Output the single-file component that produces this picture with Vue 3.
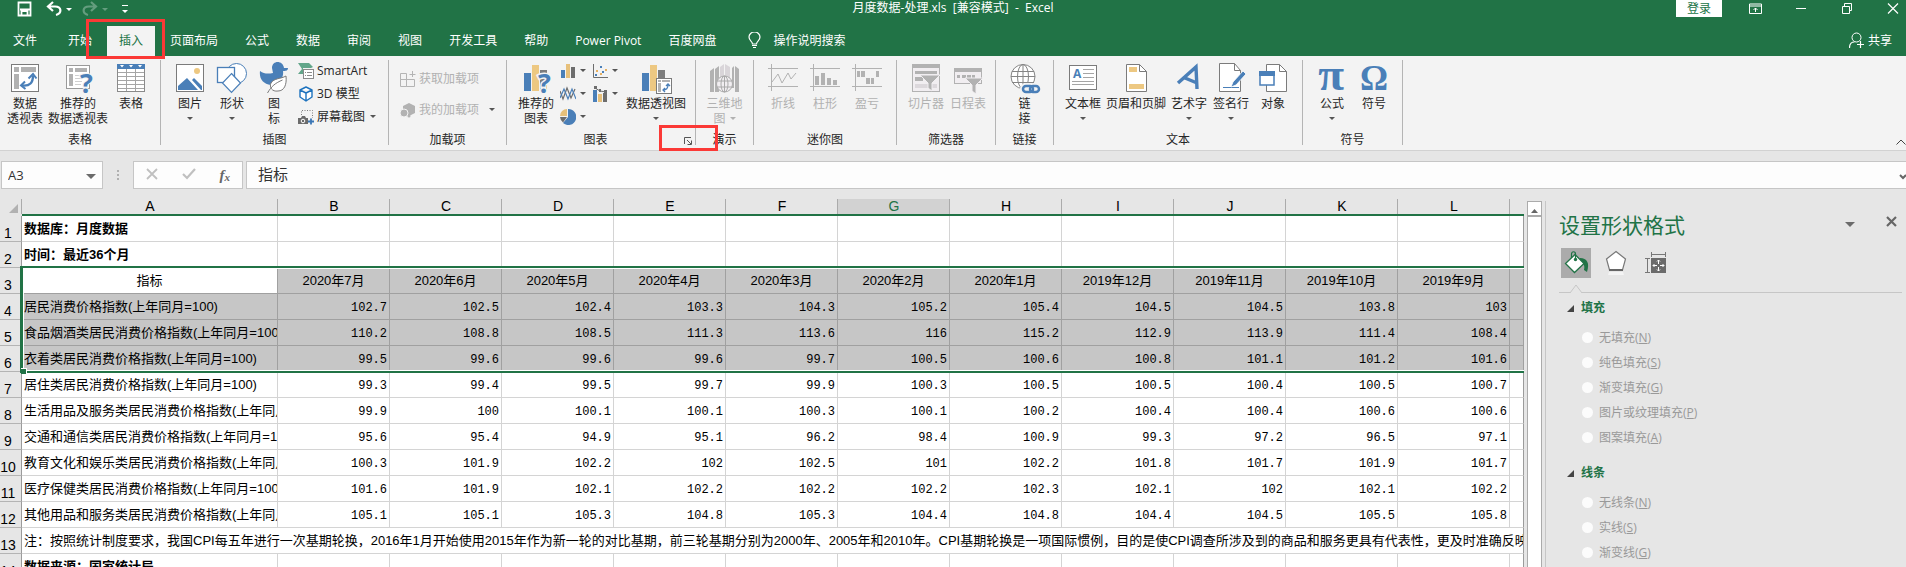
<script setup>
import { ref } from 'vue'

const tabs = ['文件', '开始', '插入', '页面布局', '公式', '数据', '审阅', '视图', '开发工具', '帮助', 'Power Pivot', '百度网盘']
const activeTab = ref('插入')

// lines: label rows, arrow: 'below' puts the caret under the label, 'inline' next to it
const groups = [
  {
    name: '表格',
    tight: true,
    large: [
      { icon: 'pivot', lines: ['数据', '透视表'] },
      { icon: 'pivot-help', lines: ['推荐的', '数据透视表'], wide: true },
      { icon: 'table', lines: ['表格'] },
    ],
  },
  {
    name: '插图',
    large: [
      { icon: 'picture', lines: ['图片'], arrow: 'below' },
      { icon: 'shapes', lines: ['形状'], arrow: 'below' },
      { icon: 'duck', lines: ['图', '标'] },
    ],
    small: [
      { icon: 'smartart', label: 'SmartArt' },
      { icon: 'cube', label: '3D 模型' },
      { icon: 'screenshot', label: '屏幕截图', arrow: true },
    ],
  },
  {
    name: '加载项',
    roomy: true,
    small: [
      { icon: 'store', label: '获取加载项', disabled: true },
      { icon: 'addin', label: '我的加载项', disabled: true, arrow: true },
    ],
  },
  {
    name: '图表',
    launcher: true,
    large: [{ icon: 'chart-help', lines: ['推荐的', '图表'] }],
    mini: ['column', 'scatter', 'lines', 'combo', 'pie'],
    after: [{ icon: 'pivot-chart', lines: ['数据透视图'], wide: true, arrow: 'below' }],
  },
  {
    name: '演示',
    centered: true,
    large: [{ icon: 'map', lines: ['三维地', '图'], arrow: 'inline', disabled: true }],
  },
  {
    name: '迷你图',
    large: [
      { icon: 'spark-line', lines: ['折线'], disabled: true },
      { icon: 'spark-column', lines: ['柱形'], disabled: true },
      { icon: 'spark-win', lines: ['盈亏'], disabled: true },
    ],
  },
  {
    name: '筛选器',
    large: [
      { icon: 'slicer', lines: ['切片器'], disabled: true },
      { icon: 'timeline', lines: ['日程表'], disabled: true },
    ],
  },
  {
    name: '链接',
    centered: true,
    large: [{ icon: 'link', lines: ['链', '接'] }],
  },
  {
    name: '文本',
    large: [
      { icon: 'textbox', lines: ['文本框'], arrow: 'below' },
      { icon: 'header', lines: ['页眉和页脚'], wide: true },
      { icon: 'wordart', lines: ['艺术字'], arrow: 'below' },
      { icon: 'sign', lines: ['签名行'], arrow: 'below' },
      { icon: 'object', lines: ['对象'] },
    ],
  },
  {
    name: '符号',
    large: [
      { icon: 'pi', lines: ['公式'], arrow: 'below' },
      { icon: 'omega', lines: ['符号'] },
    ],
  },
]

const columns = ['B', 'C', 'D', 'E', 'F', 'G', 'H', 'I', 'J', 'K', 'L']
const months = ['2020年7月', '2020年6月', '2020年5月', '2020年4月', '2020年3月', '2020年2月', '2020年1月', '2019年12月', '2019年11月', '2019年10月', '2019年9月']

const series = [
  { row: 4, label: '居民消费价格指数(上年同月=100)', values: [102.7, 102.5, 102.4, 103.3, 104.3, 105.2, 105.4, 104.5, 104.5, 103.8, 103] },
  { row: 5, label: '食品烟酒类居民消费价格指数(上年同月=100)', values: [110.2, 108.8, 108.5, 111.3, 113.6, 116, 115.2, 112.9, 113.9, 111.4, 108.4] },
  { row: 6, label: '衣着类居民消费价格指数(上年同月=100)', values: [99.5, 99.6, 99.6, 99.6, 99.7, 100.5, 100.6, 100.8, 101.1, 101.2, 101.6] },
  { row: 7, label: '居住类居民消费价格指数(上年同月=100)', values: [99.3, 99.4, 99.5, 99.7, 99.9, 100.3, 100.5, 100.5, 100.4, 100.5, 100.7] },
  { row: 8, label: '生活用品及服务类居民消费价格指数(上年同月=100)', values: [99.9, 100, 100.1, 100.1, 100.3, 100.1, 100.2, 100.4, 100.4, 100.6, 100.6] },
  { row: 9, label: '交通和通信类居民消费价格指数(上年同月=100)', values: [95.6, 95.4, 94.9, 95.1, 96.2, 98.4, 100.9, 99.3, 97.2, 96.5, 97.1] },
  { row: 10, label: '教育文化和娱乐类居民消费价格指数(上年同月=100)', values: [100.3, 101.9, 102.2, 102, 102.5, 101, 102.2, 101.8, 101.7, 101.9, 101.7] },
  { row: 11, label: '医疗保健类居民消费价格指数(上年同月=100)', values: [101.6, 101.9, 102.1, 102.2, 102.2, 102.2, 102.3, 102.1, 102, 102.1, 102.2] },
  { row: 12, label: '其他用品和服务类居民消费价格指数(上年同月=100)', values: [105.1, 105.1, 105.3, 104.8, 105.3, 104.4, 104.8, 104.4, 104.5, 105.5, 105.8] },
]

const note = '注：按照统计制度要求，我国CPI每五年进行一次基期轮换，2016年1月开始使用2015年作为新一轮的对比基期，前三轮基期分别为2000年、2005年和2010年。CPI基期轮换是一项国际惯例，目的是使CPI调查所涉及到的商品和服务更具有代表性，更及时准确反映居民消费'

const sections = [
  {
    id: 'fill',
    title: '填充',
    options: [['无填充', 'N'], ['纯色填充', 'S'], ['渐变填充', 'G'], ['图片或纹理填充', 'P'], ['图案填充', 'A']],
  },
  {
    id: 'line',
    title: '线条',
    options: [['无线条', 'N'], ['实线', 'S'], ['渐变线', 'G']],
  },
]

const cellName = ref('A3')
const formula = ref('指标')
</script>

<template>
  <div class="app">
    <svg class="sprite" aria-hidden="true">
      <symbol id="pivot" viewBox="0 0 32 32">
        <rect x="2.5" y="2.5" width="27" height="27" fill="#fff" stroke="#7b7b7b" />
        <path d="M5 5h5v5H5zM12 5h15v5H12zM5 12h5v15H5z" fill="#b1b1b1" />
        <path d="M13 23.5c8 1 11-3 11-10" fill="none" stroke="#4a7fb8" stroke-width="2.4" />
        <path d="M19.5 16.5l4.5-4.5 3.5 4.5M16 19.5l-4 4 4.5 3.5" fill="none" stroke="#4a7fb8" stroke-width="2" />
      </symbol>
      <symbol id="pivot-help" viewBox="0 0 32 32">
        <rect x="4.5" y="3.5" width="23" height="23" fill="#fff" stroke="#9a9a9a" />
        <path d="M7 6h4v4H7zM13 6h12v4H13zM7 12h4v12H7z" fill="#b1b1b1" />
        <path d="M13 13.5h8M13 16.5h6M13 19.5h7M13 22.5h6" stroke="#cfcfcf" />
        <text x="18" y="31" font-family="Open Sans, sans-serif" font-size="27" font-weight="700" fill="#4a7fb8" stroke="#f3f3f3" stroke-width="2" paint-order="stroke">?</text>
      </symbol>
      <symbol id="table" viewBox="0 0 32 32">
        <rect x="2.5" y="3.5" width="27" height="26" fill="#fff" stroke="#8a8a8a" />
        <path d="M3 10.5h26M3 14.5h26M3 18.5h26M3 22.5h26M3 26.5h26M11.5 6v23M20.5 6v23" stroke="#a5a5a5" />
        <path d="M2 2h28v5H2z" fill="#4a7fb8" />
        <path d="M5 3h4L7 5.5zM14 3h4l-2 2.5zM23 3h4l-2 2.5z" fill="#fff" />
      </symbol>
      <symbol id="picture" viewBox="0 0 32 32">
        <rect x="2.5" y="2.5" width="27" height="27" fill="#fff" stroke="#7b7b7b" />
        <circle cx="23" cy="9" r="3" fill="#edc882" />
        <path d="M4 28v-4l9-8 11 12zM18 18l2-2 8 8v4h-1z" fill="#4a7fb8" />
      </symbol>
      <symbol id="shapes" viewBox="0 0 32 32">
        <circle cx="20.5" cy="11.5" r="10" fill="#fff" stroke="#4a7fb8" />
        <rect x="1.5" y="5.5" width="17" height="15" fill="#fff" stroke="#4a7fb8" stroke-width="1.3" />
        <path d="M15.5 11.5l9 9.5-9 9.5-9-9.5z" fill="#fff" stroke="#4a7fb8" stroke-width="1.2" />
      </symbol>
      <symbol id="duck" viewBox="0 0 32 32">
        <path d="M14 6c0-8 11-8 12 0l4 0c0 3-3 3-5 3 1 5-3 15-12 14C5 22 1 17 2 9c4 3 8 3 13 2z" fill="#4a7fb8" />
        <path d="M28 14c1 9-2 15-8 15-6 1-9-4-7-8 3-5 10-4 15-7z" fill="#fff" stroke="#7b7b7b" />
        <path d="M9.5 31c4-7 8-10 15-13" fill="none" stroke="#7b7b7b" />
      </symbol>
      <symbol id="smartart" viewBox="0 0 16 16">
        <path d="M0 0h11l4 4-2 1H5v6H0l4-5z" fill="#62a68a" />
        <rect x="5.5" y="6.5" width="10" height="9" fill="#fff" stroke="#8a8a8a" />
        <path d="M7 9.5h1M9 9.5h5M7 12.5h1M9 12.5h5" stroke="#8a8a8a" />
      </symbol>
      <symbol id="cube" viewBox="0 0 16 16">
        <path d="M8 1l6 3v7l-6 4-6-4V4zM2 4l6 3 6-3M8 7v8" fill="#fff" stroke="#1e73be" stroke-width="1.4" stroke-linejoin="round" />
      </symbol>
      <symbol id="screenshot" viewBox="0 0 16 16">
        <path d="M3.5 6V1.5h11V9" fill="none" stroke="#7b7b7b" stroke-dasharray="1 1.5" />
        <path d="M0 9h3l1-2h3l1 2h2v6H0z" fill="#6b6b6b" />
        <circle cx="5" cy="12" r="1.8" fill="#6b6b6b" stroke="#fff" />
        <path d="M13 9.5v6M10 12.5h6" stroke="#3a76b5" stroke-width="1.8" />
      </symbol>
      <symbol id="store" viewBox="0 0 16 16">
        <path d="M.5 2.5h6v6h-6zM.5 8.5h6v7h-6zM6.5 8.5h8v7h-8zM12.5 0v6M9.5 3.5h6" fill="none" stroke="#b4b4b4" />
      </symbol>
      <symbol id="addin" viewBox="0 0 16 16">
        <path d="M9 1l6 3v7l-6 3-6-3V4z" fill="#b2b2b2" />
        <circle cx="4" cy="11" r="4" fill="#b2b2b2" stroke="#f3f3f3" />
        <circle cx="9" cy="14" r="1.5" fill="#b2b2b2" />
      </symbol>
      <symbol id="chart-help" viewBox="0 0 32 32">
        <path d="M4 11h7v18H4z" fill="#4a7fb8" />
        <path d="M12 3h7v26h-7z" fill="#edc882" />
        <path d="M20 8h7v21h-7z" fill="#7d7d7d" />
        <text x="18" y="31" font-family="Open Sans, sans-serif" font-size="27" font-weight="700" fill="#4a7fb8" stroke="#f3f3f3" stroke-width="3" paint-order="stroke">?</text>
      </symbol>
      <symbol id="pivot-chart" viewBox="0 0 32 32">
        <path d="M2 11h7v18H2z" fill="#4a7fb8" />
        <path d="M10 3h7v26h-7z" fill="#edc882" />
        <path d="M18 8h7v21h-7z" fill="#7d7d7d" />
        <rect x="16.5" y="16.5" width="15" height="15" fill="#fff" stroke="#7b7b7b" />
        <path d="M18 18h3v2h-3zM22 18h8v2h-8zM18 21h3v9h-3z" fill="#b1b1b1" />
        <path d="M23 28c4 0 5-2 5-5M26 24l2-2 2 2M25 26l-2 2 2 2" fill="none" stroke="#4a7fb8" stroke-width="1.3" />
      </symbol>
      <symbol id="column" viewBox="0 0 16 16">
        <path d="M1 7h4v8H1z" fill="#4a7fb8" /><path d="M6 1h4v14H6z" fill="#e7c07a" /><path d="M11 4h4v11h-4z" fill="#6d6d6d" />
      </symbol>
      <symbol id="scatter" viewBox="0 0 16 16">
        <path d="M1.5 1v13.5H16" fill="none" stroke="#6d6d6d" />
        <path d="M3 11h2v2H3zM8 3h2v2H8zM10 8h2v2h-2z" fill="#4a7fb8" /><path d="M4 7h2v2H4zM8 10h2v2H8zM13 6h2v2h-2z" fill="#e7b060" />
      </symbol>
      <symbol id="lines" viewBox="0 0 16 16">
        <path d="M0 5l3 8 4-11 4 10 4-9" fill="none" stroke="#6d6d6d" stroke-width="1.2" />
        <path d="M0 12l4-9 4 10 4-10 4 10" fill="none" stroke="#4a7fb8" stroke-width="1.2" />
      </symbol>
      <symbol id="combo" viewBox="0 0 16 16">
        <path d="M1 4h4v12H1z" fill="#4a7fb8" /><path d="M6 8h4v8H6z" fill="#e7c07a" /><path d="M11 7h4v9h-4z" fill="#6d6d6d" />
        <path d="M3 2l5 3 6 1" fill="none" stroke="#6d6d6d" /><path d="M2 0h3v3H2zM7 3h2v3H7zM12 4h3v3h-3z" fill="#6d6d6d" />
      </symbol>
      <symbol id="pie" viewBox="0 0 16 16">
        <path d="M8 0a8 8 0 1 1-5 14l5-6z" fill="#4a7fb8" /><path d="M7 0v7H0a7 7 0 0 1 7-7z" fill="#e7c07a" /><path d="M0 8h7l-4 5.5A8 8 0 0 1 0 8z" fill="#6d6d6d" />
      </symbol>
      <symbol id="map" viewBox="0 0 32 32">
        <path d="M1 9l4-3v24H1zM23 6l2-2v22h-2zM6 7l4-3v26H6zM26 4l4 3v23h-4z" fill="#b2b2b2" />
        <path d="M11 5l4-3v25h-4zM16 2l5 3v22h-5z" fill="#d9d5d9" />
        <circle cx="15.5" cy="22" r="8" fill="#f1eef1" stroke="#aaa" />
        <ellipse cx="15.5" cy="22" rx="3.5" ry="8" fill="none" stroke="#aaa" />
        <path d="M8 19h15M8 25h15M15.5 14v16" stroke="#aaa" />
      </symbol>
      <symbol id="spark-line" viewBox="0 0 32 32">
        <path d="M1 6.5h30M1 24.5h30M4.5 2v27" stroke="#b2b2b2" /><path d="M5 20l6-8 4 9 6-10 3 6 5-6" fill="none" stroke="#b2b2b2" />
      </symbol>
      <symbol id="spark-column" viewBox="0 0 32 32">
        <path d="M1 6.5h30M1 24.5h30M4.5 2v27" stroke="#b2b2b2" /><path d="M6 14h4v9H6zM12 11h4v12h-4zM18 16h4v7h-4zM24 18h4v5h-4z" fill="#b2b2b2" />
      </symbol>
      <symbol id="spark-win" viewBox="0 0 32 32">
        <path d="M1 6.5h30M1 24.5h30M4.5 2v27" stroke="#b2b2b2" /><path d="M6 9h3v6H6zM10 9h4v6h-4zM15 16h4v6h-4zM20 16h3v6h-3zM25 9h3v6h-3z" fill="#b2b2b2" />
      </symbol>
      <symbol id="slicer" viewBox="0 0 32 32">
        <rect x="2.5" y="2.5" width="27" height="27" fill="#f1eef1" stroke="#b2b2b2" />
        <path d="M2 2h28v4H2zM5 9h22v3H5zM5 15h8v4H5z" fill="#b2b2b2" /><path d="M5 22h22v4H5z" fill="#dcd8dc" />
        <path d="M10 13h20l-8 8v8l-4-3v-5z" fill="#b2b2b2" stroke="#f1eef1" />
      </symbol>
      <symbol id="timeline" viewBox="0 0 32 32">
        <rect x="2.5" y="6.5" width="27" height="15" fill="#f1eef1" stroke="#b2b2b2" />
        <path d="M2 6h28v4H2zM5 13h3v3H5zM10 13h4v3h-4zM15 13h4v3h-4zM20 13h3v3h-3z" fill="#b2b2b2" />
        <path d="M13 16h18l-7 7v9l-4-3v-6z" fill="#b2b2b2" stroke="#f1eef1" />
      </symbol>
      <symbol id="link" viewBox="0 0 32 32">
        <g fill="none" stroke="#858585"><circle cx="14" cy="14.5" r="12" fill="#fff" /><ellipse cx="14" cy="14.5" rx="5.5" ry="12" /><path d="M3 9.5h22M2 14.5h24M3 20.5h22M14 3v23" /></g>
        <g fill="none" stroke="#f3f3f3" stroke-width="6"><rect x="14" y="24" width="10" height="6" rx="3" /><rect x="21" y="24" width="10" height="6" rx="3" /></g>
        <g fill="none" stroke="#4a7fb8" stroke-width="2.5"><rect x="14" y="24" width="10" height="6" rx="3" /><rect x="21" y="24" width="9" height="6" rx="3" /></g>
      </symbol>
      <symbol id="textbox" viewBox="0 0 32 32">
        <rect x="2.5" y="3.5" width="27" height="24" fill="#fff" stroke="#7b7b7b" />
        <text x="6" y="16" font-family="Open Sans, sans-serif" font-size="12" font-weight="700" fill="#4a7fb8">A</text>
        <path d="M16 7.5h11M16 11.5h11M16 15.5h11M5 19.5h22M5 22.5h22" stroke="#a5a5a5" />
      </symbol>
      <symbol id="header" viewBox="0 0 32 32">
        <path d="M6.5 2.5h13l7 7v20h-20z" fill="#fff" stroke="#7b7b7b" /><path d="M19.5 2.5v7h7" fill="none" stroke="#7b7b7b" />
        <path d="M9 5h8v5H9zM9 22h15v5H9z" fill="#edc882" />
      </symbol>
      <symbol id="wordart" viewBox="0 0 32 32">
        <path d="M5 21L23 5l1 22M12 16l12 5" fill="none" stroke="#4a7fb8" stroke-width="3.4" />
      </symbol>
      <symbol id="sign" viewBox="0 0 32 32">
        <path d="M4.5 1.5h15l6 7v21h-21z" fill="#fff" stroke="#7b7b7b" /><path d="M19.5 1.5v7h6" fill="none" stroke="#7b7b7b" />
        <path d="M8 25.5h16" stroke="#4a7fb8" /><path d="M16 25l2-5L28 9l3 3-10 11z" fill="#4a7fb8" stroke="#fff" stroke-width=".8" />
      </symbol>
      <symbol id="object" viewBox="0 0 32 32">
        <path d="M9.5 2.5h13l7 7v20h-20z" fill="#fff" stroke="#7b7b7b" /><path d="M22.5 2.5v7h7" fill="none" stroke="#7b7b7b" />
        <rect x="3" y="10" width="14" height="13" fill="#fff" stroke="#4a7fb8" stroke-width="1.5" /><path d="M2 9h16v5H2z" fill="#4a7fb8" />
      </symbol>
      <symbol id="pi" viewBox="0 0 32 32">
        <text x="15" y="28" text-anchor="middle" font-family="Liberation Serif, serif" font-size="47" font-weight="700" fill="#4a7fb8">π</text>
      </symbol>
      <symbol id="omega" viewBox="0 0 32 32">
        <text x="16" y="28" text-anchor="middle" font-family="Liberation Serif, serif" font-size="35" font-weight="700" fill="#4a7fb8">Ω</text>
      </symbol>
    </svg>

    <header class="titlebar">
      <div class="quick">
        <button type="button" aria-label="保存">
          <svg width="16" height="16" viewBox="0 0 16 16"><path d="M1.5 1.5h12v13h-12zM3 8.5h10M4.5 14v-4h6v4" fill="none" stroke="#fff" stroke-width="1.8" /></svg>
        </button>
        <button type="button" class="quick__undo" aria-label="撤消">
          <svg width="16" height="16" viewBox="0 0 16 16"><path d="M7 1L2 5.5l5 4.5M2 5.5h7c7 0 7 7 1 8.5" fill="none" stroke="#fff" stroke-width="2.2" /></svg>
          <i class="caret caret--light"></i>
        </button>
        <button type="button" class="quick__undo quick__undo--off" aria-label="恢复" disabled>
          <svg width="16" height="16" viewBox="0 0 16 16"><path d="M9 1l5 4.5-5 4.5M14 5.5H7c-7 0-7 7-1 8.5" fill="none" stroke="#fff" stroke-width="2.2" /></svg>
          <i class="caret caret--light"></i>
        </button>
        <button type="button" class="quick__more" aria-label="自定义快速访问工具栏"><i class="caret caret--light"></i></button>
      </div>
      <h1 class="titlebar__name">月度数据-处理.xls&nbsp; [兼容模式]&nbsp; -&nbsp; Excel</h1>
      <div class="window">
        <button type="button" class="window__login">登录</button>
        <button type="button" aria-label="功能区显示选项">
          <svg width="13" height="11" viewBox="0 0 13 11"><path d="M.5 1h12v9.5H.5zM1 3h11M6.5 9V5M4.5 7l2-2 2 2" fill="none" stroke="#fff" /></svg>
        </button>
        <button type="button" aria-label="最小化">
          <svg width="12" height="11" viewBox="0 0 12 11"><path d="M1 5.5h10" stroke="#fff" /></svg>
        </button>
        <button type="button" aria-label="还原">
          <svg width="12" height="11" viewBox="0 0 12 11"><path d="M1.5 3.5h7v7h-7zM3.5 3V.5h7v7H9" fill="none" stroke="#fff" /></svg>
        </button>
        <button type="button" class="window__close" aria-label="关闭">
          <svg width="12" height="11" viewBox="0 0 12 11"><path d="M1 .5l10 10M11 .5l-10 10" stroke="#fff" stroke-width="1.2" /></svg>
        </button>
      </div>
    </header>

    <nav class="tabs">
      <button
        v-for="tab in tabs"
        :key="tab"
        type="button"
        class="tab"
        :class="{ 'tab--active': tab === activeTab, 'tab--file': tab === '文件' }"
        @click="activeTab = tab"
      >
        {{ tab }}
      </button>
      <button type="button" class="tell">
        <svg width="13" height="17" viewBox="0 0 13 17"><path d="M4.5 12c0-3-3.5-3-3.5-7a5.5 5 0 0 1 11 0c0 4-3.5 4-3.5 7zM4 13.5h5M5 15.5h3" fill="none" stroke="#fff" stroke-width="1.2" /></svg>
        操作说明搜索
      </button>
      <button type="button" class="share">
        <svg width="16" height="17" viewBox="0 0 16 17"><circle cx="7.5" cy="5.5" r="4.5" fill="none" stroke="#fff" /><path d="M.5 16c0-4 2-6 5-6M11.5 9v7M8 12.5h7" fill="none" stroke="#fff" stroke-width="1.2" /></svg>
        共享
      </button>
    </nav>

    <section class="ribbon">
      <div v-for="group in groups" :key="group.name" class="group">
        <div
          class="group__body"
          :class="{ 'group__body--tight': group.tight, 'group__body--centered': group.centered }"
        >
          <button
            v-for="item in group.large"
            :key="item.icon"
            type="button"
            class="big"
            :class="{ 'big--wide': item.wide }"
            :disabled="item.disabled"
          >
            <svg class="big__icon"><use :href="'#' + item.icon" /></svg>
            <span v-for="(line, n) in item.lines" :key="n" class="big__line">
              {{ line }}<i v-if="item.arrow === 'inline' && n === item.lines.length - 1" class="caret"></i>
            </span>
            <i v-if="item.arrow === 'below'" class="caret"></i>
          </button>
          <div v-if="group.small" class="stack" :class="{ 'stack--roomy': group.roomy }">
            <button v-for="item in group.small" :key="item.icon" type="button" class="small" :disabled="item.disabled">
              <svg class="small__icon"><use :href="'#' + item.icon" /></svg>
              {{ item.label }}
              <i v-if="item.arrow" class="caret"></i>
            </button>
          </div>
          <div v-if="group.mini" class="minis">
            <button v-for="icon in group.mini" :key="icon" type="button" class="mini" :aria-label="icon">
              <svg class="small__icon"><use :href="'#' + icon" /></svg>
              <i class="caret"></i>
            </button>
          </div>
          <button
            v-for="item in group.after"
            :key="item.icon"
            type="button"
            class="big big--wide"
          >
            <svg class="big__icon"><use :href="'#' + item.icon" /></svg>
            <span class="big__line">{{ item.lines[0] }}</span>
            <i class="caret"></i>
          </button>
        </div>
        <div class="group__foot">
          <span class="group__name">{{ group.name }}</span>
          <button v-if="group.launcher" type="button" class="launcher" aria-label="查看所有图表">
            <svg width="8" height="8" viewBox="0 0 8 8"><path d="M.5 7V.5H7M3 3l4 4M7.5 3.5v4h-4" fill="none" stroke="#555" /></svg>
          </button>
        </div>
      </div>
      <button type="button" class="collapse" aria-label="折叠功能区">
        <svg width="10" height="6" viewBox="0 0 10 6"><path d="M.5 5.5L5 1l4.5 4.5" fill="none" stroke="#444" /></svg>
      </button>
    </section>

    <section class="formula">
      <div class="namebox">
        <input v-model="cellName" aria-label="名称框" />
        <button type="button" aria-label="名称列表"><i class="caret caret--wide"></i></button>
      </div>
      <span class="formula__grip"></span>
      <div class="formula__tools">
        <button type="button" aria-label="取消"><svg width="12" height="12" viewBox="0 0 12 12"><path d="M1 1l10 10M11 1L1 11" stroke="#c0c0c0" stroke-width="1.8" /></svg></button>
        <button type="button" aria-label="输入"><svg width="14" height="12" viewBox="0 0 14 12"><path d="M1 6l4 4 8-9" fill="none" stroke="#c0c0c0" stroke-width="2.2" /></svg></button>
        <button type="button" class="formula__fx" aria-label="插入函数">f<sub>x</sub></button>
      </div>
      <input v-model="formula" class="formula__input" aria-label="编辑栏" />
      <button type="button" class="formula__expand" aria-label="展开编辑栏">
        <svg width="8" height="6" viewBox="0 0 8 6"><path d="M1 1l3 3 3-3" fill="none" stroke="#666" stroke-width="2" /></svg>
      </button>
    </section>

    <main class="work">
      <div class="sheet">
        <table>
          <colgroup>
            <col class="col-head" />
            <col class="col-label" />
            <col v-for="c in columns" :key="c" class="col-month" />
            <col />
          </colgroup>
          <thead>
            <tr>
              <th class="corner"><svg width="9" height="9" viewBox="0 0 9 9"><path d="M9 0v9H0z" fill="#b1b1b1" /></svg></th>
              <th>A</th>
              <th v-for="c in columns" :key="c" :class="{ hover: c === 'G' }">{{ c }}</th>
              <th class="last"></th>
            </tr>
          </thead>
          <tbody>
            <tr>
              <th>1</th>
              <td class="bold">数据库：月度数据</td>
              <td v-for="n in 12" :key="n"></td>
            </tr>
            <tr>
              <th>2</th>
              <td class="bold">时间：最近36个月</td>
              <td v-for="n in 12" :key="n"></td>
            </tr>
            <tr class="selected">
              <th>3</th>
              <td class="center current">指标</td>
              <td v-for="m in months" :key="m" class="center">{{ m }}</td>
              <td></td>
            </tr>
            <tr v-for="item in series" :key="item.row" :class="{ selected: item.row < 7 }">
              <th>{{ item.row }}</th>
              <td>{{ item.label }}</td>
              <td v-for="(value, n) in item.values" :key="n" class="num">{{ value }}</td>
              <td></td>
            </tr>
            <tr>
              <th>13</th>
              <td colspan="13">{{ note }}</td>
            </tr>
            <tr>
              <th>14</th>
              <td class="bold">数据来源：国家统计局</td>
              <td v-for="n in 12" :key="n"></td>
            </tr>
          </tbody>
        </table>
        <div class="selection"></div>
      </div>

      <div class="scroll">
        <button type="button" aria-label="向上滚动"><svg width="7" height="4" viewBox="0 0 7 4"><path d="M3.5 0L7 4H0z" fill="#666" /></svg></button>
        <div class="scroll__thumb"></div>
      </div>

      <aside class="pane">
        <div class="pane__head">
          <h2>设置形状格式</h2>
          <button type="button" aria-label="任务窗格选项"><i class="caret caret--wide"></i></button>
          <button type="button" aria-label="关闭窗格"><svg width="11" height="11" viewBox="0 0 11 11"><path d="M1 1l9 9M10 1l-9 9" stroke="#666" stroke-width="2.2" /></svg></button>
        </div>
        <div class="pane__tabs">
          <button type="button" class="pane__tab pane__tab--on" aria-label="填充与线条">
            <svg width="30" height="30" viewBox="0 0 30 30">
              <path d="M19 10c7 0 10 5 7 14l-3-2c1-4 0-7-4-8z" fill="#217346" />
              <path d="M14 6.5l9 9-9.5 9-9-9z" fill="#fff" stroke="#217346" stroke-width="1.3" />
              <path d="M10.5 10V6c0-3 4-3 4 0v5" fill="none" stroke="#217346" stroke-width="1.2" /><circle cx="14.5" cy="11.5" r="1.7" fill="#217346" />
            </svg>
          </button>
          <button type="button" class="pane__tab" aria-label="效果">
            <svg width="30" height="30" viewBox="0 0 30 30">
              <path d="M15 3.5l9.5 7.5-3 11h-13l-3-11z" fill="#fff" stroke="#777" stroke-width="1.2" /><path d="M8 22h14" stroke="#666" stroke-width="2" /><path d="M8 24h14l1 3H7z" fill="#f4f4f4" />
            </svg>
          </button>
          <button type="button" class="pane__tab" aria-label="大小与属性">
            <svg width="30" height="30" viewBox="0 0 30 30">
              <path d="M10 10h15v15H10z" fill="#6b6b6b" /><path d="M10.5 4v5M24.5 4v5M10 6.5h15M4 10.5h5M4 24.5h5M6.5 10v15" stroke="#777" />
              <path d="M17.5 12v4M17.5 19v4M12 17.5h4M19 17.5h4" stroke="#fff" />
              <path d="M16 13.5l1.5-1.5 1.5 1.5M16 21.5l1.5 1.5 1.5-1.5M13.5 16L12 17.5l1.5 1.5M21.5 16l1.5 1.5-1.5 1.5" fill="none" stroke="#fff" />
            </svg>
          </button>
        </div>
        <div class="pane__rule">
          <svg width="14" height="9" viewBox="0 0 14 9"><path d="M1 9L7 1l6 8" fill="#e6e6e6" stroke="#c6c6c6" /></svg>
        </div>
        <fieldset v-for="section in sections" :key="section.id" class="section">
          <legend>
            <svg width="7" height="7" viewBox="0 0 7 7"><path d="M7 0v7H0z" fill="#444" /></svg>
            {{ section.title }}
          </legend>
          <label v-for="[text, key] in section.options" :key="key">
            <input type="radio" :name="section.id" :value="key" disabled />
            <span>{{ text }}(<u>{{ key }}</u>)</span>
          </label>
        </fieldset>
      </aside>
    </main>
  </div>
</template>

<style>
body {
  margin: 0;
  overflow: hidden;
}
</style>

<style scoped>
.app {
  height: 100vh;
  display: flex;
  flex-direction: column;
  overflow: hidden;
  background: #e6e6e6;
  color: #262626;
  font: 12px/15px 'Open Sans', 'Noto Sans CJK SC', sans-serif;
}

button {
  padding: 0;
  border: 0;
  background: none;
  color: inherit;
  font: inherit;
  white-space: nowrap;
}

input {
  min-width: 0;
  padding: 0;
  border: 0;
  outline: 0;
  background: none;
  color: #333;
  font: inherit;
}

.sprite {
  display: none;
}

.caret {
  display: inline-block;
  border: 3px solid transparent;
  border-top-color: #555;
  border-bottom: 0;
}

.caret--light {
  border-top-color: #fff;
}

.caret--wide {
  border-width: 5px 5px 0;
  border-top-color: #6b6b6b;
}

/* title bar */
.titlebar {
  flex: none;
  height: 26px;
  display: grid;
  grid-template-columns: 1fr auto 1fr;
  align-items: start;
  background: #217346;
  color: #fff;
}

.quick {
  height: 18px;
  display: flex;
  align-items: center;
  padding-left: 17px;
}

.quick svg {
  display: block;
}

.quick__undo {
  display: flex;
  align-items: center;
  gap: 4px;
  margin-left: 13px;
}

.quick__undo + .quick__undo {
  margin-left: 10px;
}

.quick__undo--off {
  opacity: 0.3;
}

.quick__more {
  width: 6px;
  margin-left: 14px;
  line-height: 5px;
  border-top: 1px solid #fff;
}

.titlebar__name {
  margin: 0;
  font-size: 12px;
  font-weight: 400;
  line-height: 15px;
}

.window {
  display: flex;
  justify-content: flex-end;
  align-items: start;
}

.window button {
  width: 46px;
  height: 14px;
}

.window svg {
  display: block;
  margin: 2px auto 0;
}

.window .window__login {
  height: 17px;
  margin-right: 10px;
  background: #fff;
  color: #217346;
}

.window .window__close {
  width: 36px;
  padding-left: 10px;
}

/* tabs */
.tabs {
  flex: none;
  height: 30px;
  display: flex;
  gap: 3px;
  padding: 0 14px 0 1px;
  background: #217346;
  color: #fff;
}

.tab {
  position: relative;
  padding: 0 12px 2px;
}

.tab--file {
  padding-right: 16px;
}

.tab--active {
  background: #f3f3f3;
  color: #217346;
}

/* red marker frames around the tab and the chart launcher */
.tab--active::after,
.launcher::after {
  content: '';
  position: absolute;
  z-index: 2;
  border: 3px solid #fb3936;
  pointer-events: none;
}

.tab--active::after {
  inset: -7px -10px -3px -21px;
}

.launcher::after {
  inset: -12px -26px -6px -25px;
}

.tell,
.share {
  display: flex;
  align-items: center;
  gap: 12px;
  margin-left: 17px;
  padding-bottom: 1px;
}

.share {
  gap: 3px;
  margin-left: auto;
}

/* ribbon */
.ribbon {
  flex: none;
  position: relative;
  display: grid;
  grid-template-columns: 161px 228px 118px 189px 58px 143px 99px 58px 249px 100px 1fr;
  padding: 4px 0 5px;
  border-bottom: 1px solid #d2d2d2;
  background: #f3f3f3;
}

.group {
  display: flex;
  flex-direction: column;
  justify-content: space-between;
  height: 85px;
  border-right: 1px solid #b4b4b4;
}

.group__body {
  display: flex;
  align-items: flex-start;
  padding-left: 8px;
}

.group__body--tight {
  padding-left: 4px;
}

.group__body--centered {
  justify-content: center;
  padding-left: 0;
}

.big {
  width: 42px;
  display: flex;
  flex-direction: column;
  align-items: center;
  padding-top: 2px;
}

.big--wide {
  width: 64px;
}

.big .caret {
  margin-top: 6px;
}

.big__icon {
  width: 32px;
  height: 32px;
  margin-bottom: 2px;
}

.big__line .caret {
  margin: 0 0 3px 4px;
}

button:disabled {
  color: #b1b1b1;
}

button:disabled .big__line .caret {
  border-top-color: #b1b1b1;
}

.stack {
  display: flex;
  flex-direction: column;
  align-items: flex-start;
  margin-top: -1px;
  padding-left: 3px;
}

.stack--roomy {
  margin-top: 3px;
}

.small {
  height: 23px;
  display: flex;
  align-items: center;
  gap: 3px;
}

.small .caret {
  margin-left: 2px;
}

.stack--roomy .small {
  height: 31px;
}

.stack--roomy .caret {
  margin-left: 7px;
}

.small__icon {
  width: 16px;
  height: 16px;
}

.minis {
  display: grid;
  grid-template-columns: 32px 32px;
  margin-top: -1px;
  padding-left: 3px;
}

.mini {
  height: 23px;
  display: flex;
  align-items: center;
  gap: 4px;
}

.group__foot {
  display: flex;
  align-items: flex-end;
  line-height: 11px;
}

.group__name {
  flex: 1;
  text-align: center;
}

.launcher {
  position: relative;
  margin-right: 3px;
  height: 8px;
}

.launcher svg {
  display: block;
}

.collapse {
  align-self: end;
  justify-self: end;
  line-height: 6px;
}

/* formula bar */
.formula {
  flex: none;
  display: flex;
  height: 28px;
  margin: 10px 0 0;
  padding-left: 1px;
}

.namebox,
.formula__tools,
.formula__input {
  box-sizing: border-box;
  border: 1px solid #c6c6c6;
  background: #fdfdfd;
}

.namebox {
  width: 102px;
  display: flex;
  align-items: center;
  padding: 0 6px;
}

.namebox input {
  flex: 1;
  font-size: 13px;
}

.namebox button {
  line-height: 5px;
}

.formula__grip {
  width: 2px;
  height: 10px;
  margin: 9px 14px;
  background: repeating-linear-gradient(#b0b0b0 0 2px, transparent 2px 4px);
}

.formula__tools {
  width: 110px;
  display: flex;
  align-items: center;
  justify-content: space-around;
}

.formula__fx {
  color: #666;
  font: italic 700 15px/18px 'Liberation Serif', serif;
}

.formula__fx sub {
  font-size: 11px;
  line-height: 8px;
  vertical-align: -1px;
}

.formula__input {
  flex: 1;
  margin-left: 3px;
  padding: 0 11px 3px;
  border-right: 0;
  font-size: 15px;
}

.formula__expand {
  width: 7px;
  border: 1px solid #c6c6c6;
  border-width: 1px 0;
  background: #fdfdfd;
}

/* worksheet */
.work {
  flex: 1;
  min-height: 0;
  display: flex;
  margin-top: 1px;
}

.sheet {
  flex: 1;
  position: relative;
  min-width: 0;
  overflow: hidden;
}

table {
  width: 100%;
  table-layout: fixed;
  border-spacing: 0;
  color: #000;
  font: 13px/18px 'Liberation Sans', 'Noto Sans CJK SC', sans-serif;
}

.col-head {
  width: 22px;
}

.col-label {
  width: 256px;
}

.col-month {
  width: 112px;
}

th,
td {
  box-sizing: border-box;
  height: 26px;
  padding: 0 2px;
  border: 0 solid #d4d4d4;
  border-width: 0 1px 1px 0;
  overflow: hidden;
  white-space: nowrap;
}

td {
  background: #fff;
}

td:last-child {
  border-right-color: #9b9b9b;
}

th {
  font-size: 14px;
  font-weight: 400;
}

thead th {
  padding-top: 8px;
  border-right: 0;
  border-bottom: 2px solid #217346;
  background: linear-gradient(#ababab, #ababab) right bottom / 1px 15px no-repeat;
  line-height: 16px;
}

thead th.hover {
  background: linear-gradient(#ababab, #ababab) right bottom / 1px 15px no-repeat,
    linear-gradient(#d2d2d2, #d2d2d2) bottom / 100% 15px no-repeat;
  color: #217346;
}

thead th.last {
  background: none;
}

thead th.corner {
  padding: 12px 3px 0 9px;
  border-bottom-color: #e6e6e6;
  line-height: 9px;
}

.corner svg {
  display: block;
}

tbody th {
  padding: 8px 5px 0 0;
  border-color: #b4b4b4 #9b9b9b;
  line-height: 16px;
}

.bold {
  font-weight: 700;
}

.center {
  text-align: center;
}

.num {
  padding: 2px 2px 0;
  font-family: 'Liberation Mono', monospace;
  font-size: 12px;
  text-align: right;
}

.selected td {
  border-color: #a0a0a0;
  background: #c6c6c6;
}

.selected .current {
  background: #fff;
}

.selection {
  position: absolute;
  top: 76px;
  left: 20px;
  right: -3px;
  height: 103px;
  border: solid #217346;
  border-width: 2px 0 2px 3px;
  box-shadow: inset 0 0 0 1px #fff;
}

.selection::after {
  content: '';
  position: absolute;
  left: -2px;
  bottom: -3px;
  width: 5px;
  height: 5px;
  border: solid #fff;
  border-width: 1px 1px 0 0;
  background: #217346;
}

.scroll {
  width: 15px;
  display: flex;
  flex-direction: column;
  margin: 11px 3px 0;
}

.scroll button,
.scroll__thumb {
  border: 1px solid #ababab;
  background: #fff;
}

.scroll button {
  height: 15px;
  line-height: 8px;
}

.scroll__thumb {
  flex: 1;
  border-bottom: 0;
}

/* task pane */
.pane {
  box-sizing: border-box;
  width: 361px;
  margin-top: 11px;
  padding: 9px 4px 0 13px;
  border-left: 1px solid #c6c6c6;
  overflow: hidden;
}

.pane__head {
  display: flex;
  align-items: flex-start;
  padding-right: 5px;
}

.pane__head h2 {
  flex: 1;
  margin: 0;
  color: #217346;
  font-size: 21px;
  font-weight: 400;
  line-height: 30px;
}

.pane__head button {
  height: 24px;
  margin-left: 31px;
}

.pane__tabs {
  display: flex;
  gap: 10px;
  margin-top: 8px;
  padding-left: 2px;
}

.pane__tab {
  width: 30px;
  height: 30px;
}

.pane__tab svg,
.pane__rule svg {
  display: block;
}

.pane__tab--on {
  background: #ababab;
}

.pane__rule {
  height: 9px;
  margin-top: 6px;
  padding-left: 10px;
  background: linear-gradient(#c6c6c6, #c6c6c6) bottom / 100% 1px no-repeat;
}

.section {
  margin: 0 0 8px;
  padding: 0 0 0 23px;
  border: 0;
}

.section legend {
  display: flex;
  align-items: center;
  gap: 7px;
  margin: 0 0 2px -15px;
  padding: 0;
  color: #217346;
  font-weight: 700;
  line-height: 30px;
}

.section label {
  height: 25px;
  display: flex;
  align-items: center;
  gap: 6px;
  color: #999;
}

.section input {
  appearance: none;
  width: 11px;
  height: 11px;
  margin: 0;
  border-radius: 50%;
  background: #fcfcfc;
}
</style>
